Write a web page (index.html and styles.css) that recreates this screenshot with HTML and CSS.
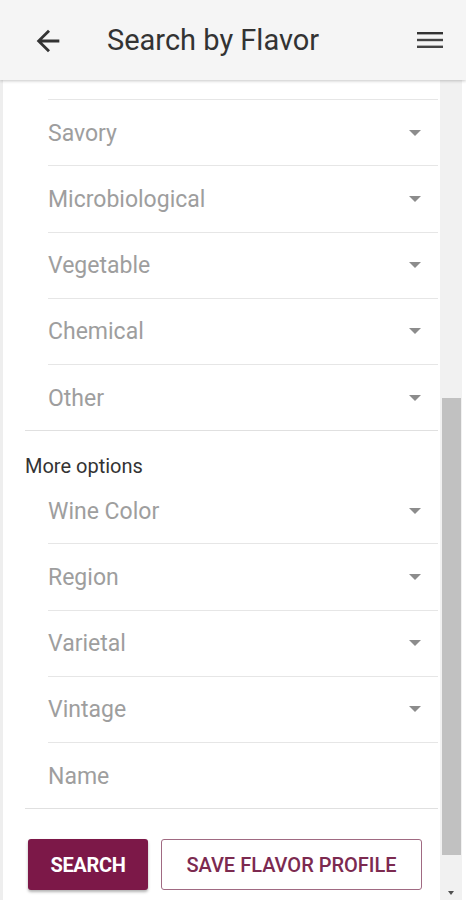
FILE: index.html
```html
<!DOCTYPE html>
<html>
<head>
<meta charset="utf-8">
<link rel="stylesheet" href="styles.css">
</head>
<body>
<header class="appbar">
  <svg class="back" width="34" height="34" viewBox="0 0 24 24"><path d="M20 11H7.83l5.59-5.59L12 4l-8 8 8 8 1.41-1.41L7.83 13H20v-2z" fill="#333"/></svg>
  <h1 class="title">Search by Flavor</h1>
  <svg class="menu" width="26" height="18" viewBox="0 0 26 18"><rect x="0" y="1" width="26" height="2.4" fill="#333"/><rect x="0" y="7.8" width="26" height="2.4" fill="#444"/><rect x="0" y="14.6" width="26" height="2.4" fill="#444"/></svg>
</header>
<div class="body-row">
  <main class="content">
    <div class="top-gap"></div>
    <section class="group">
      <div class="row"><span class="label">Savory</span><span class="caret"></span></div>
      <div class="row"><span class="label">Microbiological</span><span class="caret"></span></div>
      <div class="row"><span class="label">Vegetable</span><span class="caret"></span></div>
      <div class="row"><span class="label">Chemical</span><span class="caret"></span></div>
      <div class="row last"><span class="label">Other</span><span class="caret"></span></div>
    </section>
    <div class="more">More options</div>
    <section class="group">
      <div class="row"><span class="label">Wine Color</span><span class="caret"></span></div>
      <div class="row"><span class="label">Region</span><span class="caret"></span></div>
      <div class="row"><span class="label">Varietal</span><span class="caret"></span></div>
      <div class="row"><span class="label">Vintage</span><span class="caret"></span></div>
      <div class="row last"><span class="label">Name</span></div>
    </section>
    <div class="actions">
      <button class="btn primary">SEARCH</button>
      <button class="btn outline">SAVE FLAVOR PROFILE</button>
    </div>
  </main>
  <div class="scrollbar">
    <div class="track-top"></div>
    <div class="thumb"></div>
    <div class="track-bottom"><span class="down"></span></div>
  </div>
</div>
</body>
</html>
```
FILE: styles.css
```css
html, body {
  margin: 0;
  padding: 0;
  background: #fff;
  font-family: Roboto, "Noto Sans", sans-serif;
  width: 466px;
  height: 900px;
  overflow: hidden;
}

.appbar {
  position: relative;
  z-index: 2;
  height: 80px;
  background: #f5f5f5;
  display: flex;
  align-items: center;
  box-shadow: 0 1px 3px rgba(0,0,0,0.22);
}

.back {
  margin-left: 31px;
  margin-top: 1px;
}

.title {
  margin: 0 0 0 42px;
  font-size: 29px;
  font-weight: 400;
  color: #333;
  flex: 1;
  letter-spacing: 0;
}

.menu {
  margin-right: 23px;
}

.body-row {
  display: flex;
  height: 820px;
}

.content {
  width: 437px;
  border-left: 3px solid #eeeeee;
  display: flex;
  flex-direction: column;
}

.top-gap {
  height: 19px;
  flex: none;
  margin-left: 45px;
  margin-right: 2px;
  border-bottom: 1px solid #e6e6e6;
}

.group {
  margin-left: 22px;
  margin-right: 2px;
  border-bottom: 1px solid #e0e0e0;
}

.row {
  margin-left: 23px;
  height: 65.25px;
  display: flex;
  align-items: center;
  justify-content: space-between;
  border-bottom: 1px solid #e6e6e6;
  padding-right: 17px;
}

.row.last {
  border-bottom: none;
  height: 65px;
}

.label {
  font-size: 23px;
  color: #9e9e9e;
  padding-top: 1px;
}

.caret {
  width: 0;
  height: 0;
  border-left: 6px solid transparent;
  border-right: 6px solid transparent;
  border-top: 6px solid #8c8c8c;
}

.more {
  margin-left: 22px;
  padding-top: 23px;
  height: 24px;
  flex: none;
  font-size: 20px;
  line-height: 24px;
  color: #333;
}

.actions {
  display: flex;
  gap: 13px;
  margin-top: 30px;
  margin-left: 25px;
}

.btn {
  height: 51px;
  font-family: Roboto, "Noto Sans", sans-serif;
  font-size: 20px;
  border-radius: 3px;
  padding: 0;
  cursor: pointer;
}

.primary {
  width: 120px;
  background: #7c1848;
  color: #fff;
  border: none;
  font-weight: 700;
  letter-spacing: -0.3px;
  box-shadow: 0 2px 3px rgba(0,0,0,0.3);
}

.outline {
  width: 261px;
  background: #fff;
  color: #7c2a50;
  border: 1px solid #a06a82;
  font-weight: 500;
}

.scrollbar {
  width: 22px;
  margin-right: 4px;
  background: #f1f1f1;
  display: flex;
  flex-direction: column;
  align-items: center;
}

.track-top {
  height: 318px;
}

.thumb {
  width: 19px;
  height: 457px;
  background: #c1c1c1;
}

.track-bottom {
  flex: 1;
  display: flex;
  align-items: flex-end;
  justify-content: center;
  padding-bottom: 5px;
}

.down {
  width: 0;
  height: 0;
  border-left: 3px solid transparent;
  border-right: 3px solid transparent;
  border-top: 4px solid #505050;
}
```
